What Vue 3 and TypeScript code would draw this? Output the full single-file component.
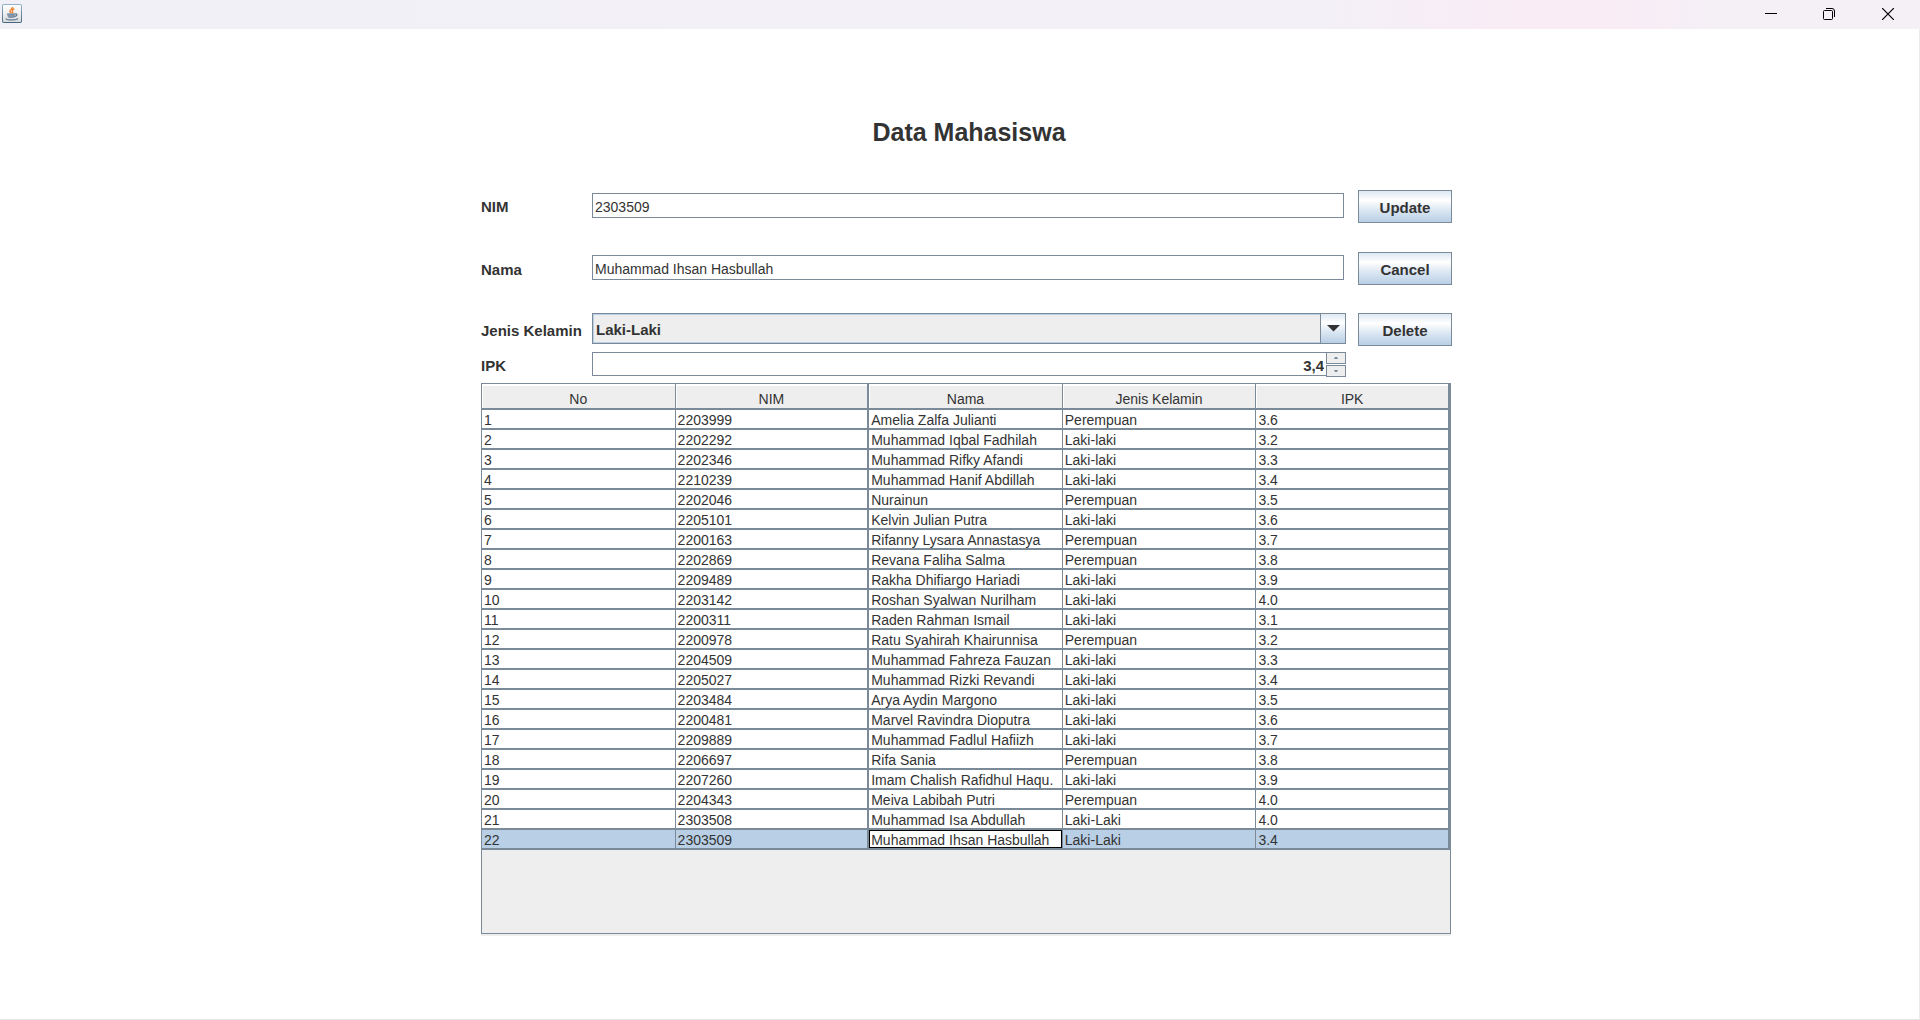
<script setup lang="ts">
import { ref } from 'vue'

interface Student {
  nim: string
  name: string
  gender: string
  gpa: string
}

const columns = ['No', 'NIM', 'Nama', 'Jenis Kelamin', 'IPK']

const students = ref<Student[]>([
  { nim: '2203999', name: 'Amelia Zalfa Julianti', gender: 'Perempuan', gpa: '3.6' },
  { nim: '2202292', name: 'Muhammad Iqbal Fadhilah', gender: 'Laki-laki', gpa: '3.2' },
  { nim: '2202346', name: 'Muhammad Rifky Afandi', gender: 'Laki-laki', gpa: '3.3' },
  { nim: '2210239', name: 'Muhammad Hanif Abdillah', gender: 'Laki-laki', gpa: '3.4' },
  { nim: '2202046', name: 'Nurainun', gender: 'Perempuan', gpa: '3.5' },
  { nim: '2205101', name: 'Kelvin Julian Putra', gender: 'Laki-laki', gpa: '3.6' },
  { nim: '2200163', name: 'Rifanny Lysara Annastasya', gender: 'Perempuan', gpa: '3.7' },
  { nim: '2202869', name: 'Revana Faliha Salma', gender: 'Perempuan', gpa: '3.8' },
  { nim: '2209489', name: 'Rakha Dhifiargo Hariadi', gender: 'Laki-laki', gpa: '3.9' },
  { nim: '2203142', name: 'Roshan Syalwan Nurilham', gender: 'Laki-laki', gpa: '4.0' },
  { nim: '2200311', name: 'Raden Rahman Ismail', gender: 'Laki-laki', gpa: '3.1' },
  { nim: '2200978', name: 'Ratu Syahirah Khairunnisa', gender: 'Perempuan', gpa: '3.2' },
  { nim: '2204509', name: 'Muhammad Fahreza Fauzan', gender: 'Laki-laki', gpa: '3.3' },
  { nim: '2205027', name: 'Muhammad Rizki Revandi', gender: 'Laki-laki', gpa: '3.4' },
  { nim: '2203484', name: 'Arya Aydin Margono', gender: 'Laki-laki', gpa: '3.5' },
  { nim: '2200481', name: 'Marvel Ravindra Dioputra', gender: 'Laki-laki', gpa: '3.6' },
  { nim: '2209889', name: 'Muhammad Fadlul Hafiizh', gender: 'Laki-laki', gpa: '3.7' },
  { nim: '2206697', name: 'Rifa Sania', gender: 'Perempuan', gpa: '3.8' },
  { nim: '2207260', name: 'Imam Chalish Rafidhul Haqu.', gender: 'Laki-laki', gpa: '3.9' },
  { nim: '2204343', name: 'Meiva Labibah Putri', gender: 'Perempuan', gpa: '4.0' },
  { nim: '2303508', name: 'Muhammad Isa Abdullah', gender: 'Laki-Laki', gpa: '4.0' },
  { nim: '2303509', name: 'Muhammad Ihsan Hasbullah', gender: 'Laki-Laki', gpa: '3.4' },
])

const selected = ref(21)
const nim = ref('2303509')
const name = ref('Muhammad Ihsan Hasbullah')
const gender = ref('Laki-Laki')
const gpa = ref('3,4')

function step(delta: number) {
  const next = Number(gpa.value.replace(',', '.')) + delta
  gpa.value = Math.min(4, Math.max(0, next)).toFixed(1).replace('.', ',')
}
</script>

<template>
  <div class="window">
    <header class="titlebar">
      <svg class="app-icon" width="20" height="20" viewBox="0 0 20 20" aria-hidden="true">
        <defs>
          <linearGradient id="frame" x1="0" y1="0" x2="0" y2="1">
            <stop offset="0" stop-color="#93b4cc" />
            <stop offset="1" stop-color="#456480" />
          </linearGradient>
          <linearGradient id="face" x1="0" y1="0" x2="0" y2="1">
            <stop offset="0" stop-color="#ffffff" />
            <stop offset="1" stop-color="#dcdcdc" />
          </linearGradient>
        </defs>
        <rect x="0" y="0" width="20" height="19" rx="2" fill="url(#frame)" />
        <rect x="1" y="1" width="18" height="17" rx="1" fill="url(#face)" />
        <path d="M10.500 3c.6 1.800-2.800 2.600-2.500 4.400.1.900 1.100 1.200 1.300 2M12.300 4.800c-1.700.6-2.400 1.500-1.800 2.400.5.700.2 1.400-.4 1.900" fill="none" stroke="#ee8a3c" stroke-width="1.600" />
        <path d="M5.300 10.200h7.700c0 2-.6 3.400-1.600 3.800H7c-1-.4-1.700-1.800-1.700-3.800z" fill="#8496aa" />
        <path d="M5 10h8.500M13 10c2.800-.9 2.600 2.600-.8 2.600" fill="none" stroke="#5d768f" stroke-width="1.200" />
        <path d="M3.500 14.800c2 1.600 10.500 1.600 12.500-.2" fill="none" stroke="#6e88a2" stroke-width="1.300" />
      </svg>
      <div class="window-controls">
        <button type="button" aria-label="Minimize">
          <svg width="12" height="12" viewBox="0 0 12 12"><path d="M0 5.500h12" stroke="#000" /></svg>
        </button>
        <button type="button" aria-label="Restore">
          <svg width="12" height="12" viewBox="0 0 12 12" fill="none" stroke="#000">
            <rect x=".5" y="2.500" width="9" height="9" rx="1" />
            <path d="M3 .5h6a2.500 2.500 0 0 1 2.500 2.500v6" />
          </svg>
        </button>
        <button type="button" aria-label="Close">
          <svg width="12" height="12" viewBox="0 0 12 12"><path d="M0 0l12 12M12 0L0 12" stroke="#000" stroke-width="1.200" /></svg>
        </button>
      </div>
    </header>

    <main class="content">
      <form class="panel" @submit.prevent>
        <h1>Data Mahasiswa</h1>

        <div class="row first">
          <label for="nim">NIM</label>
          <input id="nim" v-model="nim" class="text" type="text" />
          <button type="submit" class="action">Update</button>
        </div>

        <div class="row">
          <label for="nama">Nama</label>
          <input id="nama" v-model="name" class="text" type="text" />
          <button type="button" class="action">Cancel</button>
        </div>

        <div class="row">
          <label for="gender">Jenis Kelamin</label>
          <div class="combo">
            <select id="gender" v-model="gender">
              <option>Laki-Laki</option>
              <option>Perempuan</option>
            </select>
            <span class="combo-arrow">
              <svg width="13" height="7" viewBox="0 0 13 7"><path d="M0 0h13L6.500 6.500z" fill="#333" /></svg>
            </span>
          </div>
          <button type="button" class="action">Delete</button>
        </div>

        <div class="row spinner-row">
          <label for="ipk">IPK</label>
          <div class="spinner">
            <input id="ipk" v-model="gpa" type="text" inputmode="decimal" />
            <div class="steps">
              <button type="button" aria-label="Naik" @click="step(0.1)">
                <svg width="4" height="2" viewBox="0 0 4 2"><path d="M0 2h4L3 0H1z" fill="#7a8a99" /></svg>
              </button>
              <button type="button" aria-label="Turun" @click="step(-0.1)">
                <svg width="4" height="2" viewBox="0 0 4 2"><path d="M0 0h4L3 2H1z" fill="#7a8a99" /></svg>
              </button>
            </div>
          </div>
        </div>

        <div class="scroll">
          <table>
            <thead>
              <tr>
                <th v-for="column in columns" :key="column" scope="col">{{ column }}</th>
              </tr>
            </thead>
            <tbody>
              <tr v-for="(student, index) in students" :key="student.nim" :class="{ selected: index === selected }">
                <td>{{ index + 1 }}</td>
                <td>{{ student.nim }}</td>
                <td v-if="index === selected" class="editing">
                  <input v-model="student.name" type="text" aria-label="Nama" />
                </td>
                <td v-else>{{ student.name }}</td>
                <td>{{ student.gender }}</td>
                <td>{{ student.gpa }}</td>
              </tr>
            </tbody>
          </table>
        </div>
      </form>
    </main>
  </div>
</template>

<style>
body {
  margin: 0;
}
</style>

<style scoped>
* {
  box-sizing: border-box;
}

.window {
  display: flex;
  flex-direction: column;
  min-height: 100vh;
  border-right: 1px solid #ebebeb;
  border-bottom: 1px solid #e6e6e6;
  background: #fff;
  color: #333;
  font-family: 'Liberation Sans', Arial, sans-serif;
  font-size: 14px;
  line-height: 18px;
}

input,
select,
button {
  margin: 0;
  border-radius: 0;
  color: inherit;
  font: inherit;
  outline: none;
}

.titlebar {
  display: flex;
  justify-content: space-between;
  align-items: center;
  height: 29px;
  margin-right: -1px;
  padding: 0 0 2px 2px;
  background: linear-gradient(90deg, #f2f0f7 0%, #f3f0f7 68%, #f9ecf5 79%, #f9ecf5 84%, #f5eff6 89%, #f5eff6 100%);
}

.app-icon {
  margin-top: 1px;
}

.window-controls {
  display: flex;
}

.window-controls button {
  display: flex;
  align-items: center;
  justify-content: center;
  width: 58px;
  height: 27px;
  padding: 0;
  border: 0;
  background: none;
}

.window-controls button:last-child {
  width: 62px;
  padding-right: 2px;
}

.content {
  display: grid;
  grid-template-columns: 481fr 971fr 467fr;
}

.panel {
  grid-column: 2;
  min-width: 0;
  padding-top: 88px;
}

h1 {
  margin: 0 106px 43px 111px;
  font-size: 25px;
  line-height: 30px;
  text-align: center;
}

.row {
  display: grid;
  grid-template-columns: 111px minmax(0, 1fr) 94px;
  align-items: start;
  margin-bottom: 28px;
}

.row.first {
  min-height: 34px;
}

label {
  padding-top: 9px;
  font-size: 15px;
  font-weight: 700;
  white-space: nowrap;
}

.row.first label {
  padding-top: 8px;
}

.text {
  height: 25px;
  margin: 3px 14px 0 0;
  padding: 3px 2px 0;
  border: 1px solid #7a8a99;
  background: #fff;
}

.action {
  height: 33px;
  padding: 2px 0 0;
  border: 1px solid #7a8a99;
  background: linear-gradient(#dde8f3 0%, #fff 30%, #dde8f3 60%, #b8cfe5 100%);
  font-size: 15px;
  font-weight: 700;
}

.combo {
  position: relative;
  margin-right: 12px;
}

.combo select {
  display: block;
  width: 100%;
  height: 31px;
  padding: 3px 28px 0 3px;
  border: 1px solid #7a8a99;
  background: #eee;
  box-shadow: inset 0 0 0 1px #b8cfe5;
  font-size: 15px;
  font-weight: 700;
  appearance: none;
}

.combo-arrow {
  position: absolute;
  top: 0;
  right: 0;
  bottom: 0;
  display: flex;
  align-items: center;
  justify-content: center;
  width: 26px;
  border: 1px solid #7a8a99;
  background: linear-gradient(#dde8f3 0%, #fff 30%, #dde8f3 60%, #b8cfe5 100%);
  pointer-events: none;
}

.spinner-row {
  margin: -22px 0 6px;
}

.spinner-row label {
  padding-top: 5px;
}

.spinner {
  display: flex;
  align-items: flex-start;
  margin-right: 12px;
}

.spinner input {
  flex: 1;
  min-width: 0;
  height: 24px;
  padding: 3px 2px 0;
  border: 1px solid #7a8a99;
  border-right: 0;
  background: #fff;
  font-size: 15px;
  font-weight: 700;
  text-align: right;
}

.steps {
  display: flex;
  flex-direction: column;
  gap: 1px;
  width: 20px;
}

.steps button {
  display: flex;
  align-items: center;
  justify-content: center;
  height: 12px;
  padding: 0;
  border: 1px solid #7a8a99;
  background: #eee;
}

.scroll {
  min-height: 551px;
  margin-right: 1px;
  border: 1px solid #7a8a99;
  background: #eee;
  box-shadow: 0 2px 0 #eee;
}

table {
  width: 100%;
  border-collapse: separate;
  border-spacing: 0;
  table-layout: fixed;
}

th,
td {
  overflow: hidden;
  border-right: 1px solid #7a8a99;
  border-bottom: 2px solid #7a8a99;
  font-weight: 400;
  white-space: nowrap;
}

th:nth-child(2),
td:nth-child(2),
th:last-child,
td:last-child {
  border-right-width: 2px;
}

th {
  height: 26px;
  padding: 6px 0 0;
  background: #eee;
  box-shadow: inset 1px 2px 0 #fff;
  line-height: 16px;
  text-align: center;
}

td {
  height: 20px;
  padding: 2px 0 0 2px;
  background: #fff;
  line-height: 16px;
}

.selected td {
  background: #b8cfe5;
}

.selected .editing {
  padding: 0;
}

.editing input {
  display: block;
  width: 100%;
  height: 18px;
  padding: 2px 1px 0;
  border: 1px solid #000;
  background: #fff;
}
</style>
